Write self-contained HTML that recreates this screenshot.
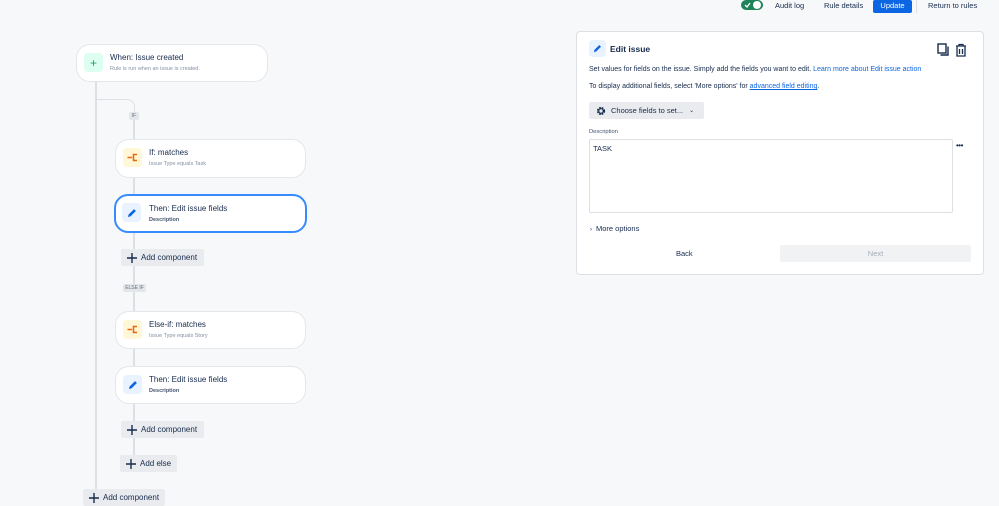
<!DOCTYPE html>
<html><head><style>
*{box-sizing:border-box;margin:0;padding:0}
body{width:999px;height:503px;overflow:hidden;background:#f7f8f9;font-family:"Liberation Sans",sans-serif;color:#172b4d;position:relative}
.a{position:absolute}
.card{position:absolute;background:#fff;border:1px solid #e4e6ea;border-radius:14px}
.ic{position:absolute;width:19px;height:19px;border-radius:4px;display:flex;align-items:center;justify-content:center}
.t{position:absolute;font-size:8px;color:#172b4d;white-space:nowrap}
.s{position:absolute;font-size:5.5px;color:#8590a2;white-space:nowrap}
.sb{position:absolute;font-size:5.5px;color:#44546f;font-weight:bold;white-space:nowrap}
.btn{position:absolute;background:#e9ebee;border-radius:2px;font-size:8px;color:#172b4d;display:flex;align-items:center;padding-left:6px;white-space:nowrap}
.btn svg{margin-right:4px}
.ln{position:absolute;background:#dcdfe4}
.tag{position:absolute;background:#e4e6ea;color:#626f86;font-size:5px;display:flex;align-items:center;justify-content:center;border-radius:2px}
.rt{position:absolute;font-size:7.5px;color:#172b4d;white-space:nowrap}
</style></head><body>
<div class="ln" style="left:95px;top:81px;width:2px;height:422px"></div>
<div class="a" style="left:96px;top:99px;width:39px;height:30px;border-top:1.5px solid #dcdfe4;border-right:1.5px solid #dcdfe4;border-top-right-radius:8px"></div>
<div class="ln" style="left:133px;top:120px;width:1.5px;height:345px"></div>
<div class="tag" style="left:129px;top:112px;width:10px;height:8px">IF</div>
<div class="tag" style="left:123px;top:284px;width:23px;height:8px">ELSE IF</div>

<div class="card" style="left:76px;top:44px;width:192px;height:38px"></div>
<div class="ic" style="left:84px;top:53px;background:#dcfff1;color:#22a06b;font-size:12px">+</div>
<div class="t" style="left:110px;top:53px">When: Issue created</div>
<div class="s" style="left:110px;top:66px">Rule is run when an issue is created.</div>

<div class="card" style="left:115px;top:139px;width:191px;height:39px"></div>
<div class="ic" style="left:123px;top:148px;background:#fff7d6"><svg width="11" height="9" viewBox="0 0 11 9"><path d="M0.5 4.5h4.5M10 1.5H6.5v6H10" stroke="#e56910" stroke-width="1.6" fill="none"/></svg></div>
<div class="t" style="left:149px;top:148px">If: matches</div>
<div class="s" style="left:149px;top:161px">Issue Type equals Task</div>

<div class="card" style="left:114px;top:194px;width:193px;height:39px;border:2px solid #388bff"></div>
<div class="ic" style="left:122px;top:203px;background:#e9f2ff"><svg width="10" height="10" viewBox="0 0 10 10"><path d="M1 9l.6-2.5L7 1.1l1.9 1.9L3.5 8.4z" fill="#0c66e4"/></svg></div>
<div class="t" style="left:149px;top:204px">Then: Edit issue fields</div>
<div class="sb" style="left:149px;top:217px">Description</div>

<div class="btn" style="left:121px;top:249px;width:83px;height:17px"><svg width="10" height="10"><path d="M5 0v10M0 5h10" stroke="#172b4d" stroke-width="1.4"/></svg>Add component</div>

<div class="card" style="left:115px;top:311px;width:191px;height:38px"></div>
<div class="ic" style="left:123px;top:320px;background:#fff7d6"><svg width="11" height="9" viewBox="0 0 11 9"><path d="M0.5 4.5h4.5M10 1.5H6.5v6H10" stroke="#e56910" stroke-width="1.6" fill="none"/></svg></div>
<div class="t" style="left:149px;top:320px">Else-if: matches</div>
<div class="s" style="left:149px;top:333px">Issue Type equals Story</div>

<div class="card" style="left:115px;top:366px;width:191px;height:38px"></div>
<div class="ic" style="left:123px;top:375px;background:#e9f2ff"><svg width="10" height="10" viewBox="0 0 10 10"><path d="M1 9l.6-2.5L7 1.1l1.9 1.9L3.5 8.4z" fill="#0c66e4"/></svg></div>
<div class="t" style="left:149px;top:375px">Then: Edit issue fields</div>
<div class="sb" style="left:149px;top:388px">Description</div>

<div class="btn" style="left:121px;top:421px;width:83px;height:17px"><svg width="10" height="10"><path d="M5 0v10M0 5h10" stroke="#172b4d" stroke-width="1.4"/></svg>Add component</div>
<div class="btn" style="left:120px;top:455px;width:57px;height:17px"><svg width="10" height="10"><path d="M5 0v10M0 5h10" stroke="#172b4d" stroke-width="1.4"/></svg>Add else</div>
<div class="btn" style="left:83px;top:489px;width:82px;height:17px"><svg width="10" height="10"><path d="M5 0v10M0 5h10" stroke="#172b4d" stroke-width="1.4"/></svg>Add component</div>

<div class="a" style="left:741px;top:0;width:22px;height:10px;background:#1f845a;border-radius:5px"></div>
<div class="a" style="left:753px;top:1px;width:8px;height:8px;background:#fff;border-radius:50%"></div>
<svg class="a" style="left:744px;top:2px" width="7" height="6"><path d="M1 3l2 2 3-4" stroke="#fff" stroke-width="1.3" fill="none"/></svg>
<div class="rt" style="left:775px;top:1px">Audit log</div>
<div class="rt" style="left:824px;top:1px">Rule details</div>
<div class="a" style="left:873px;top:0;width:39px;height:13px;background:#0c66e4;border-radius:2px;color:#fff;font-size:7.5px;text-align:center;line-height:11px">Update</div>
<div class="a" style="left:916px;top:0;width:1px;height:13px;background:#dcdfe4"></div>
<div class="rt" style="left:928px;top:1px">Return to rules</div>

<div class="a" style="left:576px;top:31px;width:408px;height:244px;background:#fff;border:1px solid #dcdfe4;border-radius:4px"></div>
<div class="ic" style="left:589px;top:40px;width:17px;height:17px;background:#e9f2ff"><svg width="9" height="9" viewBox="0 0 10 10"><path d="M1 9l.6-2.5L7 1.1l1.9 1.9L3.5 8.4z" fill="#0c66e4"/></svg></div>
<div class="a" style="left:610px;top:44px;font-size:8.5px;font-weight:bold;color:#172b4d">Edit issue</div>
<svg class="a" style="left:937px;top:43px" width="30" height="14"><rect x="1" y="1" width="8" height="9" fill="none" stroke="#172b4d" stroke-width="1.4"/><path d="M3.5 12h7.5V3.5" fill="none" stroke="#172b4d" stroke-width="1.4"/><path d="M19 3h10M22 3V1.5h4V3M20 3.5v9.5h8V3.5M22.5 6v5M25.5 6v5" fill="none" stroke="#172b4d" stroke-width="1.3"/></svg>
<div class="a" style="left:589px;top:66px;font-size:7px;color:#172b4d;white-space:nowrap">Set values for fields on the issue. Simply add the fields you want to edit. <span style="color:#0c66e4">Learn more about Edit issue action</span></div>
<div class="a" style="left:589px;top:83px;font-size:7px;color:#172b4d;white-space:nowrap">To display additional fields, select 'More options' for <span style="color:#0c66e4;text-decoration:underline">advanced field editing</span>.</div>
<div class="a" style="left:589px;top:102px;width:115px;height:17px;background:#e9ebee;border-radius:2px;font-size:7.5px;display:flex;align-items:center;padding-left:7px;white-space:nowrap"><svg width="10" height="10" viewBox="0 0 10 10" style="margin-right:5px"><circle cx="5" cy="5" r="3" fill="none" stroke="#172b4d" stroke-width="2.2" stroke-dasharray="1.6 0.8"/><circle cx="5" cy="5" r="2.2" fill="none" stroke="#172b4d" stroke-width="1"/></svg>Choose fields to set...<span style="margin-left:6px;font-size:6px">⌄</span></div>
<div class="a" style="left:589px;top:129px;font-size:5.8px;color:#44546f">Description</div>
<div class="a" style="left:589px;top:139px;width:364px;height:74px;border:1px solid #dcdfe4;border-radius:2px"></div>
<div class="a" style="left:593px;top:144px;font-size:7.5px">TASK</div>
<div class="a" style="left:956px;top:141px;font-size:8px;letter-spacing:-0.5px">•••</div>
<div class="a" style="left:590px;top:224px;font-size:7.5px;white-space:nowrap"><span style="font-size:6px;margin-right:4px">›</span>More options</div>
<div class="a" style="left:676px;top:249px;font-size:7.5px">Back</div>
<div class="a" style="left:780px;top:245px;width:191px;height:17px;background:#f1f2f4;border-radius:2px;font-size:7.5px;color:#a5adba;text-align:center;line-height:17px">Next</div>
</body></html>
